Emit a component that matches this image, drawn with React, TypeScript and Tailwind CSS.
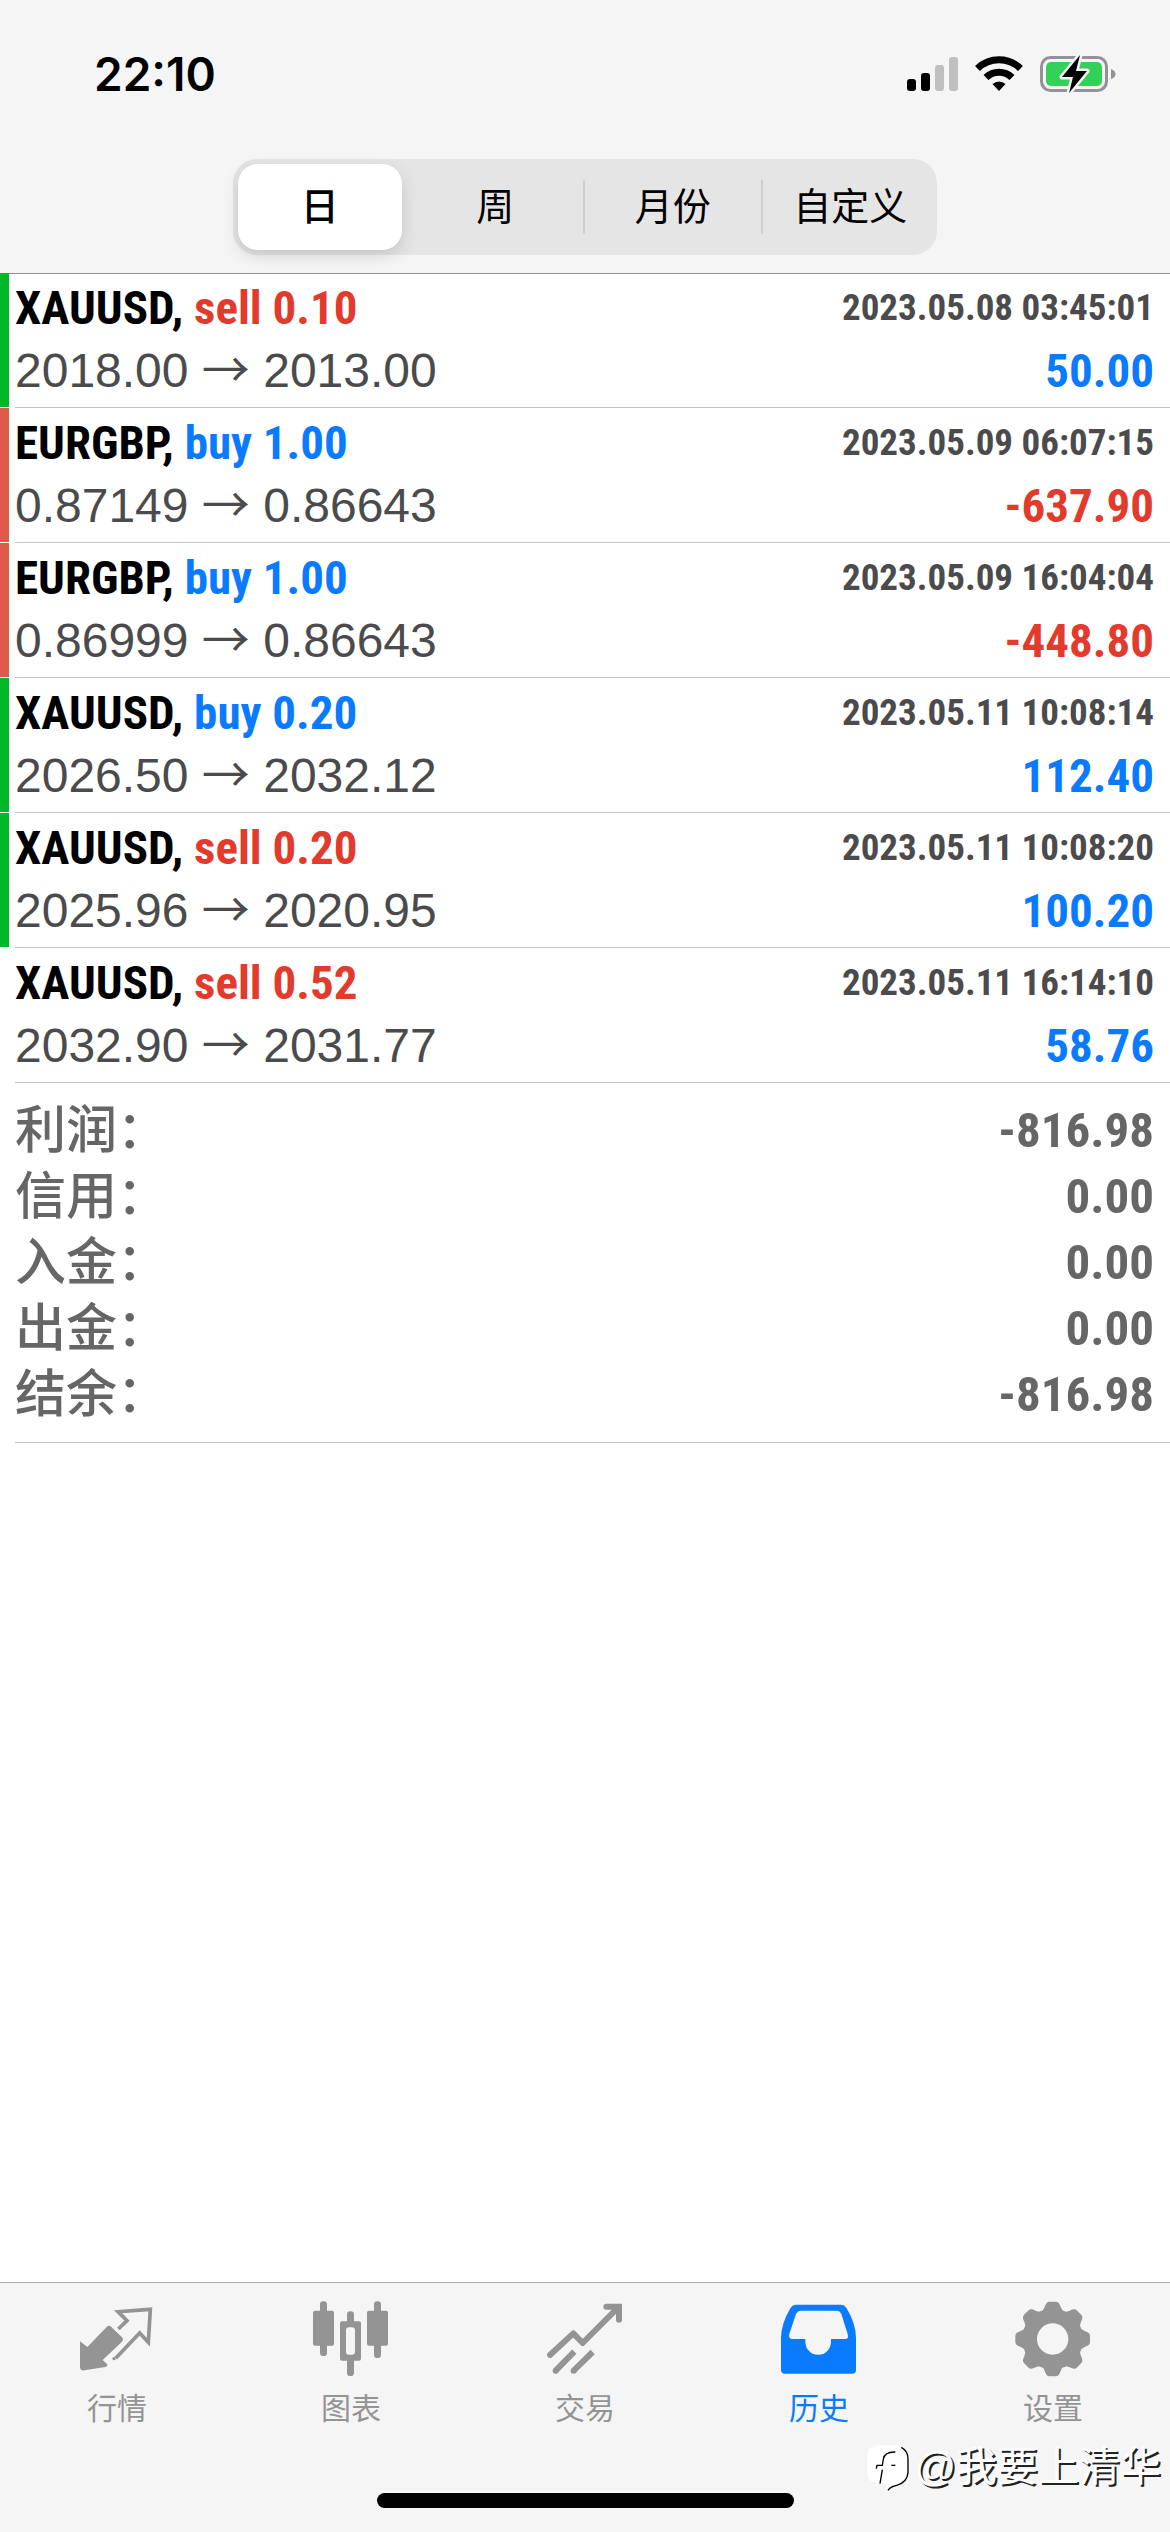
import React, { useState } from "react";

type Deal = {
  symbol: string;
  side: "buy" | "sell";
  volume: string;
  open: string;
  close: string;
  time: string;
  profit: string;
  marker: "up" | "down" | "none";
};

const deals: Deal[] = [
  { symbol: "XAUUSD", side: "sell", volume: "0.10", open: "2018.00", close: "2013.00", time: "2023.05.08 03:45:01", profit: "50.00", marker: "up" },
  { symbol: "EURGBP", side: "buy", volume: "1.00", open: "0.87149", close: "0.86643", time: "2023.05.09 06:07:15", profit: "-637.90", marker: "down" },
  { symbol: "EURGBP", side: "buy", volume: "1.00", open: "0.86999", close: "0.86643", time: "2023.05.09 16:04:04", profit: "-448.80", marker: "down" },
  { symbol: "XAUUSD", side: "buy", volume: "0.20", open: "2026.50", close: "2032.12", time: "2023.05.11 10:08:14", profit: "112.40", marker: "up" },
  { symbol: "XAUUSD", side: "sell", volume: "0.20", open: "2025.96", close: "2020.95", time: "2023.05.11 10:08:20", profit: "100.20", marker: "up" },
  { symbol: "XAUUSD", side: "sell", volume: "0.52", open: "2032.90", close: "2031.77", time: "2023.05.11 16:14:10", profit: "58.76", marker: "none" },
];

const totals = [
  ["利润：", "-816.98"],
  ["信用：", "0.00"],
  ["入金：", "0.00"],
  ["出金：", "0.00"],
  ["结余：", "-816.98"],
];

const periods = ["日", "周", "月份", "自定义"];

const markerClass = { up: "bg-[#00b828]", down: "bg-[#e05a4b]", none: "bg-transparent" };

function StatusIcons() {
  return (
    <svg className="h-[40px] w-[210px]" viewBox="907 54 210 40" aria-hidden="true">
      <rect x="907" y="79" width="9" height="12" rx="3" />
      <rect x="921" y="73" width="9" height="18" rx="3" />
      <rect x="935" y="65" width="9" height="26" rx="3" fill="#c0c0c0" />
      <rect x="949" y="57" width="9" height="34" rx="3" fill="#c0c0c0" />
      <g fill="none" stroke="#000" strokeWidth="7">
        <path d="M977.500 68.500 A31 31 0 0 1 1020.500 68.500" />
        <path d="M986 77.500 A18.500 18.500 0 0 1 1012 77.500" />
      </g>
      <path d="M999 91 L992.500 84 A9.500 9.500 0 0 1 1005.500 84 Z" />
      <rect x="1041.500" y="57.500" width="65" height="33" rx="9" fill="none" stroke="#959199" strokeWidth="3" />
      <rect x="1046" y="62" width="56" height="24" rx="5" fill="#34d158" />
      <path d="M1111 69 Q1115.500 70.500 1115.500 74 Q1115.500 77.500 1111 79 Z" fill="#959199" />
      <path d="M1080 55 L1062 77 H1073 L1069 93 L1087 71 H1076 Z" fill="#000" stroke="#f5f5f5" strokeWidth="5" strokeLinejoin="round" paintOrder="stroke" />
    </svg>
  );
}

const iconClass = "size-[76px]";

function QuotesIcon() {
  return (
    <svg className={iconClass} viewBox="237 94 228 228" fill="currentColor" aria-hidden="true">
      <path d="M240 215 L262 232 L320 172 Q327 165 334 172 L366 203 Q372 210 366 216 L308 271 L321 283 Q324 290 316 292 L254 302 Q240 304 240 292 Z" />
      <path d="M355 178 L381 153 L354 126 L451 119 L445 218 L419 190 L347 266" fill="none" stroke="currentColor" strokeWidth="11" strokeLinejoin="miter" />
      <circle cx="342" cy="267" r="5" />
    </svg>
  );
}

function ChartIcon() {
  return (
    <svg className={iconClass} viewBox="939 94 228 228" fill="currentColor" aria-hidden="true">
      <rect x="960" y="95" width="21" height="164" rx="10" />
      <rect x="939" y="123" width="63" height="105" rx="6" />
      <rect x="1122" y="95" width="21" height="170" rx="10" />
      <rect x="1101" y="123" width="63" height="105" rx="6" />
      <rect x="1041" y="125" width="21" height="45" rx="10" />
      <rect x="1041" y="260" width="21" height="59" rx="10" />
      <path fillRule="evenodd" d="M1026 155 H1077 Q1083 155 1083 161 V267 Q1083 273 1077 273 H1026 Q1020 273 1020 267 V161 Q1020 155 1026 155 Z M1047 173 Q1038 173 1038 182 V246 Q1038 255 1047 255 H1056 Q1065 255 1065 246 V182 Q1065 173 1056 173 Z" />
    </svg>
  );
}

function TradeIcon() {
  return (
    <svg className={iconClass} viewBox="201 94 228 228" fill="none" stroke="currentColor" strokeWidth="18" aria-hidden="true">
      <path d="M210 256 L280 191 L308 220 L414 114" strokeLinecap="round" strokeLinejoin="round" />
      <path d="M379 111 H417 V150" strokeLinecap="round" />
      <path d="M390 111 L417 138 V111 Z" fill="currentColor" strokeWidth="2" />
      <path d="M227 303 L283 246 M281 303 L338 247" />
      <circle cx="227" cy="303" r="9" fill="currentColor" strokeWidth="0" />
      <circle cx="281" cy="303" r="9" fill="currentColor" strokeWidth="0" />
    </svg>
  );
}

function HistoryIcon() {
  return (
    <svg className={iconClass} viewBox="903 94 228 228" fill="currentColor" aria-hidden="true">
      <path
        fillRule="evenodd"
        d="M947 105 H1084 Q1093 105 1099 114 Q1128 162 1128 205 V300 Q1128 312 1116 312 H915 Q903 312 903 300 V205 Q903 162 932 114 Q938 105 947 105 Z M964 123 Q953 123 948 133 L928 193 Q925 208 937 208 H976 V216 A38 39 0 0 0 1053 216 V208 H1096 Q1107 208 1103 193 L1084 133 Q1080 123 1069 123 Z"
      />
    </svg>
  );
}

function SettingsIcon() {
  const teeth = [0, 45, 90, 135, 180, 225, 270, 315];
  return (
    <svg className={iconClass} viewBox="525 94 228 228" fill="currentColor" aria-hidden="true">
      <circle cx="638" cy="208" r="69" fill="none" stroke="currentColor" strokeWidth="44" />
      {teeth.map((a) => (
        <path key={a} transform={`rotate(${a} 638 208)`} d="M598 130 Q610 124 614 112 Q619 96 628 96 H648 Q657 96 662 112 Q666 124 678 130 Z" />
      ))}
    </svg>
  );
}

function BubbleLogo() {
  return (
    <svg className="h-[48px] w-[44px]" viewBox="20 30 132 144" fill="none" aria-hidden="true">
      <path d="M58 37 H108 Q142 37 142 70 V118 Q142 150 108 153 Q92 156 85 170 Q84 158 76 150 H58 Q24 150 24 118 V70 Q24 37 58 37 Z" fill="#fff" />
      <path d="M126 43 Q146 54 146 78 V118 Q144 148 112 157 Q94 160 86 172" stroke="#000" strokeWidth="4" />
      <path d="M108 57 Q76 56 72 78 L69 97 H53 L51 107 M69 110 L62 152" stroke="#000" strokeWidth="4" />
      <path d="M96 97 H108" stroke="#000" strokeWidth="4" />
    </svg>
  );
}

const tabs = [
  { label: "行情", icon: QuotesIcon, active: false },
  { label: "图表", icon: ChartIcon, active: false },
  { label: "交易", icon: TradeIcon, active: false },
  { label: "历史", icon: HistoryIcon, active: true },
  { label: "设置", icon: SettingsIcon, active: false },
];

function DealRow({ deal }: { deal: Deal }) {
  return (
    <li className="flex h-[135px]">
      <div className={`mb-px w-[9px] shrink-0 ${markerClass[deal.marker]}`} />
      <div className="ml-[6px] flex-1 border-b border-[#c3c3c5] pt-[3px] pr-4">
        <div className="flex h-[63px] items-center justify-between font-['Roboto_Condensed','Liberation_Sans_Narrow','Liberation_Sans',sans-serif] font-bold">
          <p className="text-[47px] leading-[63px]">
            {deal.symbol},{" "}
            <span className={deal.side === "buy" ? "text-[#0a7aff]" : "text-[#e23a2c]"}>
              {deal.side} {deal.volume}
            </span>
          </p>
          <time className="text-[37px] leading-[63px] text-[#4b4b4d]">{deal.time}</time>
        </div>
        <div className="flex h-[63px] items-center justify-between">
          <p className="font-['Liberation_Sans',sans-serif] text-[48px] leading-[63px] text-[#4b4b4d]">
            {deal.open} <span className="font-['Noto_Sans_CJK_SC',sans-serif] leading-none">→</span> {deal.close}
          </p>
          <p
            className={`font-['Roboto_Condensed','Liberation_Sans_Narrow','Liberation_Sans',sans-serif] text-[47px] leading-[63px] font-bold ${
              deal.profit.startsWith("-") ? "text-[#e23a2c]" : "text-[#0a7aff]"
            }`}
          >
            {deal.profit}
          </p>
        </div>
      </div>
    </li>
  );
}

export default function App() {
  const [period, setPeriod] = useState("日");
  return (
    <div className="flex min-h-screen flex-col bg-white font-['Liberation_Sans','Noto_Sans_CJK_SC',sans-serif] text-black">
      <header className="border-b border-[#8e8e90] bg-[#f5f5f5] pb-[18px]">
        <div className="flex h-[159px] items-start justify-between pt-[54px] pr-[53px] pl-[94px]">
          <span className="font-['Inter',sans-serif] text-[46px] leading-[40px] font-semibold">22:10</span>
          <StatusIcons />
        </div>
        <div role="group" aria-label="周期" className="mx-auto flex h-[96px] w-[704px] max-w-full rounded-[24px] bg-[#e5e5e6] p-[5px]">
          {periods.map((p, i) => (
            <React.Fragment key={p}>
              {i > 1 && <span className="my-4 w-[2px] bg-[#cfcfd1]" />}
              <button
                type="button"
                aria-pressed={p === period}
                onClick={() => setPeriod(p)}
                className={`mr-[6px] ml-[6px] flex-1 rounded-[20px] text-[38px] leading-[56px] first:ml-0 last:mr-0 ${
                  p === period ? "bg-white font-medium shadow-[0_6px_16px_rgba(0,0,0,0.14)]" : ""
                }`}
              >
                {p}
              </button>
            </React.Fragment>
          ))}
        </div>
      </header>

      <main className="flex-1">
        <ul className="-mt-px">
          {deals.map((d) => (
            <DealRow key={d.time} deal={d} />
          ))}
        </ul>
        <dl className="ml-[15px] border-b border-[#c3c3c5] pt-[15px] pr-4 pb-[14px] text-[#666]">
          {totals.map(([label, value]) => (
            <div key={label} className="flex h-[66px] items-center justify-between">
              <dt className="text-[51px] leading-[66px] font-medium">{label}</dt>
              <dd className="font-['Roboto_Condensed','Liberation_Sans_Narrow','Liberation_Sans',sans-serif] text-[49px] leading-[66px] font-bold">{value}</dd>
            </div>
          ))}
        </dl>
      </main>

      <footer className="relative border-t border-[#adadaf] bg-[#f5f5f5] pb-6">
        <nav className="grid h-[210px] grid-cols-5 items-start pt-[18px]">
          {tabs.map(({ label, icon: Icon, active }) => (
            <a key={label} href="#" className={`flex flex-col items-center ${active ? "text-[#0a7aff]" : "text-[#949494]"}`}>
              <Icon />
              <span className="mt-[7px] font-['Noto_Sans_CJK_SC',sans-serif] text-[30px] leading-[44px]">{label}</span>
            </a>
          ))}
        </nav>
        <div className="mx-auto h-[15px] w-[417px] rounded-full bg-black" />
        <div className="absolute right-[9px] bottom-[40px] flex items-center gap-1 text-white">
          <BubbleLogo />
          <span className="text-[41px] leading-[50px] [text-shadow:2px_2px_0_#222]">@我要上清华</span>
        </div>
      </footer>
    </div>
  );
}
